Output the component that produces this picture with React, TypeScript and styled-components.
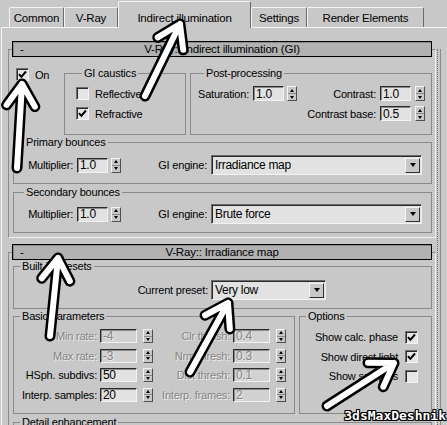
import React from "react";
import styled, { createGlobalStyle } from "styled-components";

const GlobalStyle = createGlobalStyle`
  html, body {
    margin: 0;
    padding: 0;
    background: #c8c8c8;
  }
  body {
    font-family: "Liberation Sans", Arial, sans-serif;
    font-size: 11px;
    letter-spacing: -0.2px;
    color: #000;
  }
`;

const Window = styled.div`
  position: relative;
  width: 447px;
  height: 425px;
  overflow: hidden;
  background: #c8c8c8;
`;

const TabStrip = styled.div`
  display: flex;
  align-items: flex-end;
  height: 27px;
  padding-left: 9px;
  box-sizing: border-box;
`;

const Tab = styled.div<{ $w: number; $active?: boolean }>`
  position: relative;
  z-index: 1;
  width: ${(p) => p.$w}px;
  height: ${(p) => (p.$active ? 27 : 20)}px;
  padding-top: ${(p) => (p.$active ? 5 : 0)}px;
  margin-bottom: ${(p) => (p.$active ? -1 : 0)}px;
  box-sizing: border-box;
  display: flex;
  align-items: center;
  justify-content: center;
  font-size: 11.5px;
  background: #c8c8c8;
  border-top: 1px solid #f4f4f4;
  border-left: 1px solid #f4f4f4;
  border-right: 1px solid #6a6a6a;
  border-radius: 2px 2px 0 0;
  white-space: nowrap;
`;

const TabPage = styled.div`
  display: flex;
  width: 446px;
  margin-left: 1px;
  height: 398px;
  box-sizing: border-box;
  padding: 5px 0 0 6px;
  border-top: 1px solid #f4f4f4;
  border-left: 1px solid #f4f4f4;
  overflow: hidden;
`;

const RolloutArea = styled.div`
  flex: none;
  width: 428px;
  min-width: 0;
`;

const ScrollStrip = styled.div`
  flex: none;
  width: 2px;
  margin: 16px 0 0 1px;
  border-left: 1px dotted #707070;
  border-right: 1px solid #8a8a8a;
`;

const RolloutFrame = styled.div<{ $top: number }>`
  width: 428px;
  box-sizing: border-box;
  margin-top: ${(p) => p.$top}px;
  padding: 0 3px 4px 4px;
  border: 1px solid #8a8a8a;
  border-right-color: #f0f0f0;
  border-bottom-color: #f0f0f0;
`;

const RolloutHeader = styled.div`
  display: flex;
  align-items: center;
  width: 420px;
  height: 16px;
  margin: -9px 0 0 -1px;
  box-sizing: border-box;
  font-size: 11.5px;
  background: #b2b2b2;
  border: 1px solid #000;
  box-shadow: inset 1px 1px 0 #8c8c8c;
  white-space: nowrap;
  overflow: hidden;
`;

const Collapse = styled.span`
  width: 40px;
  padding-left: 7px;
  box-sizing: border-box;
`;

const HeaderTitle = styled.span`
  flex: 1;
  margin-right: 40px;
  text-align: center;
`;

const Row = styled.div<{ $gap?: number; $top?: number }>`
  display: flex;
  align-items: flex-start;
  gap: ${(p) => p.$gap ?? 0}px;
  margin-top: ${(p) => p.$top ?? 0}px;
`;

const Group = styled.fieldset<{ $w?: number; $h: number; $top?: number; $left?: number; $pad?: string }>`
  margin: ${(p) => p.$top ?? 0}px 0 0 ${(p) => p.$left ?? 0}px;
  padding: ${(p) => p.$pad ?? "0"};
  min-width: 0;
  box-sizing: border-box;
  width: ${(p) => (p.$w ? `${p.$w}px` : "auto")};
  flex: ${(p) => (p.$w ? "none" : "1")};
  height: ${(p) => p.$h}px;
  border: 1px solid #8a8a8a;
`;

const Legend = styled.legend`
  margin-left: 6px;
  padding: 0 2px;
  line-height: 13px;
  white-space: nowrap;
`;

const OnCell = styled.div`
  display: flex;
  align-items: center;
  gap: 6px;
  width: 51px;
  flex: none;
  padding: 1px 0 0 3px;
  box-sizing: border-box;
`;

const CheckRows = styled.div`
  display: flex;
  flex-direction: column;
  gap: 7px;
`;

const CheckLine = styled.label`
  display: flex;
  align-items: center;
  gap: 6px;
  height: 13px;
`;

const CheckBoxFrame = styled.span`
  display: inline-flex;
  align-items: center;
  justify-content: center;
  width: 13px;
  height: 13px;
  flex: none;
  box-sizing: border-box;
  background: #e6e6e6;
  border-top: 1px solid #6e6e6e;
  border-left: 1px solid #6e6e6e;
  border-right: 1px solid #f4f4f4;
  border-bottom: 1px solid #f4f4f4;
  box-shadow: inset 1px 1px 0 #2a2a2a;
`;

const Field = styled.div<{ $disabled?: boolean }>`
  display: flex;
  align-items: center;
  color: ${(p) => (p.$disabled ? "#858585" : "#000")};
  text-shadow: ${(p) => (p.$disabled ? "1px 1px 0 #ececec" : "none")};
`;

const FieldLabel = styled.span<{ $w?: number; $gap?: number }>`
  width: ${(p) => (p.$w ? `${p.$w}px` : "auto")};
  flex: none;
  margin-right: ${(p) => p.$gap ?? 3}px;
  text-align: right;
  white-space: nowrap;
`;

const ValueBox = styled.div<{ $w: number; $h: number; $disabled?: boolean }>`
  width: ${(p) => p.$w}px;
  height: ${(p) => p.$h}px;
  box-sizing: border-box;
  padding-left: 2px;
  display: flex;
  align-items: center;
  font-size: 12px;
  letter-spacing: -0.3px;
  background: ${(p) => (p.$disabled ? "#d2d2d2" : "#e2e2e2")};
  border-top: 1px solid #2a2a2a;
  border-left: 1px solid #2a2a2a;
  border-right: 1px solid #f2f2f2;
  border-bottom: 1px solid #f2f2f2;
  box-shadow: inset 1px 1px 0 #8a8a8a;
`;

const SpinnerBox = styled.div<{ $h: number; $gap: number }>`
  display: flex;
  flex-direction: column;
  width: 10px;
  height: ${(p) => p.$h}px;
  margin-left: ${(p) => p.$gap}px;
  box-sizing: border-box;
  border-top: 1px solid #f4f4f4;
  border-left: 1px solid #f4f4f4;
  border-right: 1px solid #505050;
  border-bottom: 1px solid #505050;
`;

const SpinHalf = styled.div<{ $down?: boolean }>`
  flex: 1;
  display: flex;
  align-items: center;
  justify-content: center;
  border-bottom: ${(p) => (p.$down ? "none" : "1px solid #8a8a8a")};
  &::after {
    content: "";
    width: 0;
    height: 0;
    border-left: 2.5px solid transparent;
    border-right: 2.5px solid transparent;
    ${(p) => (p.$down ? "border-top: 3px solid #000;" : "border-bottom: 3px solid #000;")}
  }
`;

const DropBox = styled.div<{ $w: number }>`
  display: flex;
  align-items: center;
  justify-content: space-between;
  width: ${(p) => p.$w}px;
  height: 20px;
  flex: none;
  box-sizing: border-box;
  padding: 0 1px 0 3px;
  font-size: 12px;
  letter-spacing: -0.3px;
  background: #e2e2e2;
  border-top: 1px solid #6a6a6a;
  border-left: 1px solid #6a6a6a;
  border-right: 1px solid #f2f2f2;
  border-bottom: 1px solid #f2f2f2;
  box-shadow: inset 1px 1px 0 #2a2a2a;
`;

const DropButton = styled.span`
  display: flex;
  align-items: center;
  justify-content: center;
  width: 15px;
  height: 15px;
  box-sizing: border-box;
  background: #c8c8c8;
  border-top: 1px solid #f4f4f4;
  border-left: 1px solid #f4f4f4;
  border-right: 1px solid #303030;
  border-bottom: 1px solid #303030;
  &::after {
    content: "";
    width: 0;
    height: 0;
    border-left: 3.5px solid transparent;
    border-right: 3.5px solid transparent;
    border-top: 4px solid #000;
  }
`;

const PostRows = styled.div`
  display: flex;
  flex-direction: column;
  gap: 5px;
`;

const PostLine = styled.div<{ $end?: boolean }>`
  display: flex;
  justify-content: ${(p) => (p.$end ? "flex-end" : "space-between")};
`;

const BounceRow = styled.div`
  display: flex;
  align-items: center;
  height: 20px;
`;

const GrowLabel = styled.span`
  flex: 1;
  margin-right: 4px;
  text-align: right;
  white-space: nowrap;
`;

const ParamRows = styled.div`
  display: flex;
  flex-direction: column;
  gap: 5.5px;
`;

const ParamLine = styled.div`
  display: flex;
  height: 14px;
`;

const OptionLine = styled.div`
  display: flex;
  align-items: center;
  justify-content: flex-end;
  gap: 7px;
  height: 14px;
  white-space: nowrap;
`;

const Overlay = styled.svg`
  position: absolute;
  left: 0;
  top: 0;
  width: 447px;
  height: 425px;
  pointer-events: none;
  z-index: 5;
`;

const Watermark = styled.div`
  position: absolute;
  right: 1px;
  bottom: 3px;
  z-index: 6;
  font-family: "DejaVu Sans Mono", monospace;
  font-weight: bold;
  font-size: 13px;
  line-height: 13px;
  letter-spacing: 0;
  color: #fff;
  text-shadow: 1px 0 0 #000, -1px 0 0 #000, 0 1px 0 #000, 0 -1px 0 #000,
    1px 1px 0 #000, -1px -1px 0 #000, 1px -1px 0 #000, -1px 1px 0 #000;
`;

const CheckBox = ({ checked }: { checked?: boolean }) => (
  <CheckBoxFrame>
    {checked && (
      <svg width="9" height="9" viewBox="0 0 9 9">
        <polyline points="1,4.2 3.3,6.8 8,1.5" fill="none" stroke="#000" strokeWidth="2" />
      </svg>
    )}
  </CheckBoxFrame>
);

const Spinner = ({ h = 15, gap = 3 }: { h?: number; gap?: number }) => (
  <SpinnerBox $h={h} $gap={gap}>
    <SpinHalf />
    <SpinHalf $down />
  </SpinnerBox>
);

type SpinFieldProps = {
  label: string;
  value: string;
  labelW?: number;
  labelGap?: number;
  inputW?: number;
  h?: number;
  spinGap?: number;
  disabled?: boolean;
};

const SpinField = ({ label, value, labelW, labelGap = 3, inputW = 31, h = 15, spinGap = 3, disabled }: SpinFieldProps) => (
  <Field $disabled={disabled}>
    <FieldLabel $w={labelW} $gap={labelGap}>
      {label}
    </FieldLabel>
    <ValueBox $w={inputW} $h={h} $disabled={disabled}>
      {value}
    </ValueBox>
    <Spinner h={h} gap={spinGap} />
  </Field>
);

const Dropdown = ({ value, w }: { value: string; w: number }) => (
  <DropBox $w={w}>
    <span>{value}</span>
    <DropButton />
  </DropBox>
);

const Rollout = ({ title, top, children }: { title: string; top: number; children: React.ReactNode }) => (
  <RolloutFrame $top={top}>
    <RolloutHeader>
      <Collapse>-</Collapse>
      <HeaderTitle>{title}</HeaderTitle>
    </RolloutHeader>
    {children}
  </RolloutFrame>
);

type Pt = [number, number];

const arrows: { tail: Pt; tip: Pt }[] = [
  { tail: [145, 96], tip: [180, 24] },
  { tail: [17, 168], tip: [22, 84] },
  { tail: [50, 336], tip: [58, 258] },
  { tail: [190, 372], tip: [228, 303] },
  { tail: [327, 406], tip: [394, 363] },
];

const arrowPath = (tail: Pt, tip: Pt, len = 26, deg = 33) => {
  const dx = tail[0] - tip[0];
  const dy = tail[1] - tip[1];
  const l = Math.hypot(dx, dy);
  const ux = dx / l;
  const uy = dy / l;
  const a = (deg * Math.PI) / 180;
  const c = Math.cos(a);
  const s = Math.sin(a);
  const b1 = [tip[0] + len * (ux * c - uy * s), tip[1] + len * (ux * s + uy * c)];
  const b2 = [tip[0] + len * (ux * c + uy * s), tip[1] + len * (-ux * s + uy * c)];
  return `M${tail[0]} ${tail[1]} L${tip[0]} ${tip[1]} M${b1[0]} ${b1[1]} L${tip[0]} ${tip[1]} L${b2[0]} ${b2[1]}`;
};

const tabs = [
  { name: "Common", w: 55 },
  { name: "V-Ray", w: 54 },
  { name: "Indirect illumination", w: 133, active: true },
  { name: "Settings", w: 56 },
  { name: "Render Elements", w: 117 },
];

const basicRows = [
  { l: ["Min rate:", "-4"], r: ["Clr thresh:", "0.4"], lDis: true },
  { l: ["Max rate:", "-3"], r: ["Nrm thresh:", "0.3"], lDis: true },
  { l: ["HSph. subdivs:", "50"], r: ["Dist thresh:", "0.1"] },
  { l: ["Interp. samples:", "20"], r: ["Interp. frames:", "2"] },
];

const options = [
  { label: "Show calc. phase", checked: true },
  { label: "Show direct light", checked: true },
  { label: "Show samples", checked: false },
];

const App = () => (
  <Window>
    <GlobalStyle />
    <TabStrip>
      {tabs.map((t) => (
        <Tab key={t.name} $w={t.w} $active={t.active}>
          {t.name}
        </Tab>
      ))}
    </TabStrip>

    <TabPage>
      <RolloutArea>
        <Rollout title="V-Ray:: Indirect illumination (GI)" top={16}>
          <Row $top={10}>
            <OnCell>
              <CheckBox checked />
              <span>On</span>
            </OnCell>
            <Group $w={122} $h={68} $pad="7px 0 0 11px">
              <Legend>GI caustics</Legend>
              <CheckRows>
                <CheckLine>
                  <CheckBox />
                  Reflective
                </CheckLine>
                <CheckLine>
                  <CheckBox checked />
                  Refractive
                </CheckLine>
              </CheckRows>
            </Group>
            <Group $h={68} $left={4} $pad="6px 6px 0 7px">
              <Legend>Post-processing</Legend>
              <PostRows>
                <PostLine>
                  <SpinField label="Saturation:" value="1.0" labelGap={4} />
                  <SpinField label="Contrast:" value="1.0" labelGap={4} spinGap={4} />
                </PostLine>
                <PostLine $end>
                  <SpinField label="Contrast base:" value="0.5" labelGap={4} spinGap={4} />
                </PostLine>
              </PostRows>
            </Group>
          </Row>

          <Group $h={48} $top={1} $pad="6px 9px 0 4px">
            <Legend>Primary bounces</Legend>
            <BounceRow>
              <SpinField label="Multiplier:" value="1.0" labelW={55} labelGap={4} />
              <GrowLabel>GI engine:</GrowLabel>
              <Dropdown value="Irradiance map" w={211} />
            </BounceRow>
          </Group>

          <Group $h={47} $top={2} $pad="5px 9px 0 4px">
            <Legend>Secondary bounces</Legend>
            <BounceRow>
              <SpinField label="Multiplier:" value="1.0" labelW={55} labelGap={4} />
              <GrowLabel>GI engine:</GrowLabel>
              <Dropdown value="Brute force" w={211} />
            </BounceRow>
          </Group>
        </Rollout>

        <Rollout title="V-Ray:: Irradiance map" top={14}>
          <Group $h={49} $pad="7px 0 0 0">
            <Legend>Built-in presets</Legend>
            <BounceRow>
              <FieldLabel $w={194} $gap={3}>
                Current preset:
              </FieldLabel>
              <Dropdown value="Very low" w={115} />
            </BounceRow>
          </Group>

          <Row $top={1} $gap={4}>
            <Group $w={282} $h={104} $pad="6px 0 0 0">
              <Legend>Basic parameters</Legend>
              <ParamRows>
                {basicRows.map((r) => (
                  <ParamLine key={r.l[0]}>
                    <SpinField
                      label={r.l[0]}
                      value={r.l[1]}
                      labelW={83}
                      inputW={37}
                      h={14}
                      spinGap={6}
                      disabled={r.lDis}
                    />
                    <SpinField label={r.r[0]} value={r.r[1]} labelW={77} inputW={37} h={14} spinGap={6} disabled />
                  </ParamLine>
                ))}
              </ParamRows>
            </Group>
            <Group $h={104} $pad="7px 13px 0 0">
              <Legend>Options</Legend>
              <ParamRows>
                {options.map((o) => (
                  <OptionLine key={o.label}>
                    <span>{o.label}</span>
                    <CheckBox checked={o.checked} />
                  </OptionLine>
                ))}
              </ParamRows>
            </Group>
          </Row>

          <Group $h={30} $top={2}>
            <Legend>Detail enhancement</Legend>
          </Group>
        </Rollout>
      </RolloutArea>
      <ScrollStrip />
    </TabPage>

    <Overlay viewBox="0 0 447 425">
      {arrows.map((a, i) => (
        <g key={i} fill="none" strokeLinecap="round" strokeLinejoin="round">
          <path d={arrowPath(a.tail, a.tip)} stroke="#000" strokeWidth={11} />
          <path d={arrowPath(a.tail, a.tip)} stroke="#fff" strokeWidth={6} />
        </g>
      ))}
    </Overlay>
    <Watermark>3dsMaxDeshnik</Watermark>
  </Window>
);

export default App;
